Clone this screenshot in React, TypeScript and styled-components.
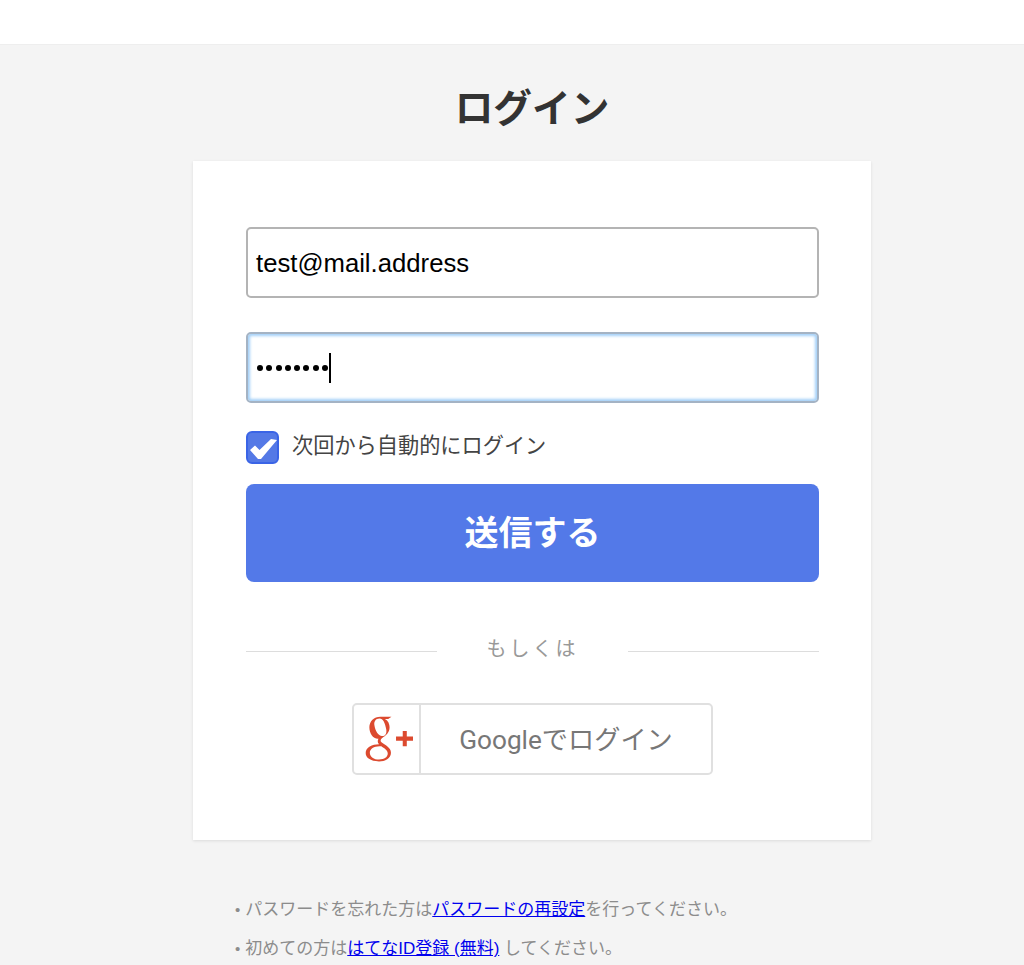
import React from "react";
import styled, { createGlobalStyle } from "styled-components";

const Global = createGlobalStyle`
  html, body { margin: 0; padding: 0; background: #f4f4f4; }
  body { font-family: "Liberation Sans", "Noto Sans CJK JP", sans-serif; height: 965px; overflow: hidden; }
`;

const Header = styled.header`
  box-sizing: border-box;
  height: 45px;
  background: #fff;
  border-bottom: 1px solid #eeeeee;
`;

const Main = styled.main`
  display: flex;
  flex-direction: column;
  align-items: center;
  padding-left: 40px;
`;

const Title = styled.h1`
  margin: 40px 0 0;
  height: 76px;
  font-size: 38.7px;
  line-height: 48px;
  font-weight: 700;
  color: #333;
  text-align: center;
`;

const Card = styled.section`
  box-sizing: border-box;
  width: 678px;
  height: 679px;
  background: #fff;
  box-shadow: 0 1px 3px rgba(0, 0, 0, 0.1);
  padding: 66px 52px 0 53px;
  display: flex;
  flex-direction: column;
`;

const Field = styled.div<{ $focused?: boolean }>`
  box-sizing: border-box;
  height: 71px;
  border-radius: 5px;
  border: 2px solid ${(p) => (p.$focused ? "#a4b3c4" : "#b4b4b4")};
  background: #fff;
  padding: ${(p) => (p.$focused ? "0 8px" : "2px 8px 0")};
  display: flex;
  align-items: center;
  font-size: 25.7px;
  color: #000;
  box-shadow: ${(p) => (p.$focused ? "inset 0 0 3px 2px #a3d0f8" : "none")};
  margin-bottom: ${(p) => (p.$focused ? "28px" : "34px")};
`;

const Dots = styled.span`
  display: flex;
  gap: 3.3px;
  margin-left: 1px;
`;

const Dot = styled.i`
  width: 6px;
  height: 6px;
  border-radius: 50%;
  background: #000;
`;

const Caret = styled.span`
  width: 1.5px;
  height: 30px;
  background: #000;
  margin-left: 1px;
`;

const CheckRow = styled.label`
  display: flex;
  align-items: center;
  gap: 13px;
  height: 33px;
  margin-bottom: 20px;
  font-size: 21.2px;
  color: #444;
`;

const CheckLabel = styled.span`
  padding-bottom: 9px;
`;

const CheckBox = styled.span`
  box-sizing: border-box;
  width: 33px;
  height: 33px;
  border-radius: 6px;
  background: #5479e6;
  border: 2px solid #3a64e6;
  display: flex;
  align-items: center;
  justify-content: center;
`;

const Submit = styled.button`
  height: 98px;
  border: 0;
  border-radius: 8px;
  background: #5379e8;
  color: #fff;
  font-family: inherit;
  font-size: 34px;
  font-weight: 700;
  flex: none;
  padding: 0 0 6px;
`;

const Divider = styled.div`
  display: flex;
  align-items: center;
  margin-top: 54px;
  height: 26px;
  font-size: 20px;
  letter-spacing: 3px;
  color: #999;
`;

const Rule = styled.span`
  flex: none;
  width: 191px;
  height: 1px;
  margin-top: 4px;
  background: #ddd;
`;

const DividerLabel = styled.span`
  flex: 1;
  text-align: center;
  padding-bottom: 4px;
`;

const GoogleButton = styled.button`
  box-sizing: border-box;
  align-self: center;
  margin-top: 41px;
  width: 361px;
  height: 72px;
  padding: 0;
  display: flex;
  background: #fff;
  border: 2px solid #e0e0e0;
  border-radius: 5px;
  font-family: Roboto, "Noto Sans CJK JP", sans-serif;
  font-size: 26.2px;
  color: #777;
`;

const LogoCell = styled.span`
  flex: none;
  width: 65px;
  height: 100%;
  border-right: 2px solid #e0e0e0;
  display: flex;
  align-items: center;
  justify-content: center;
`;

const GoogleLabel = styled.span`
  flex: 1;
  align-self: center;
  text-align: center;
  padding-bottom: 2px;
`;

const Notes = styled.ul`
  box-sizing: border-box;
  width: 678px;
  margin: 50px 0 0;
  padding: 0 0 0 42px;
  list-style: none;
  font-size: 17px;
  line-height: 39px;
  color: #8c8c8c;
`;

const Note = styled.li`
  white-space: nowrap;
  &::before { content: "•"; margin-right: 5px; font-size: 15px; }
`;

const Link = styled.a`
  color: #0000ee;
  text-decoration: underline;
`;

const LogoSvg = styled.svg`
  flex: none;
  margin-left: 2px;
`;

const GPlus = () => (
  <LogoSvg width="51.5" height="49.7" viewBox="0 0 56 54" aria-hidden="true">
    <path
      fillRule="evenodd"
      fill="#dc4a2f"
      d="M8 14.5C8 8 13 3 20 3h12l-3.5 2.5h-3.6C28.500 7.500 30 11 30 14.500c0 6-4.500 9.500-8 11.500-2 1.200-2.500 3.500-.5 5 4 3 10 5.500 10 11 0 6-6.500 9.500-13 9.500C9 51.500 4 47.500 4 42.500c0-6 7-9.500 14.500-9.500-2-2.500-1.500-4.500-.5-6C12 27.500 8 21 8 14.500zM19 4.800c-4 0-6.200 3-5.500 7.500.8 6 4.300 11.500 8.200 11.700 3.600.200 5.500-3 4.600-7.800C25.200 10 23 4.800 19 4.800zM19 35c-6 0-10.500 3-10.500 7 0 4.500 4.500 7.500 10 7.500 6 0 9.500-2.800 9.500-6.500 0-3.500-3-5.300-7-8z"
    />
    <path d="M44.300 18.500h4.400v6H56V29h-7.300v6h-4.400v-6H37v-4.500h7.300z" fill="#dc4a2f" />
  </LogoSvg>
);

export default function App() {
  return (
    <>
      <Global />
      <Header />
      <Main>
        <Title>ログイン</Title>
        <Card>
          <Field>test@mail.address</Field>
          <Field $focused>
            <Dots>
              {Array.from({ length: 8 }, (_, i) => <Dot key={i} />)}
            </Dots>
            <Caret />
          </Field>
          <CheckRow>
            <CheckBox>
              <svg width="29" height="29" viewBox="2 2 29 29" aria-hidden="true">
                <path d="M4 19l5-4.500 4.500 4.500L25 8l6 1-16 19h-3z" fill="#fff" />
              </svg>
            </CheckBox>
            <CheckLabel>次回から自動的にログイン</CheckLabel>
          </CheckRow>
          <Submit>送信する</Submit>
          <Divider>
            <Rule />
            <DividerLabel>もしくは</DividerLabel>
            <Rule />
          </Divider>
          <GoogleButton>
            <LogoCell><GPlus /></LogoCell>
            <GoogleLabel>Googleでログイン</GoogleLabel>
          </GoogleButton>
        </Card>
        <Notes>
          <Note>パスワードを忘れた方は<Link href="#">パスワードの再設定</Link>を行ってください。</Note>
          <Note>初めての方は<Link href="#">はてなID登録 (無料)</Link> してください。</Note>
        </Notes>
      </Main>
    </>
  );
}
